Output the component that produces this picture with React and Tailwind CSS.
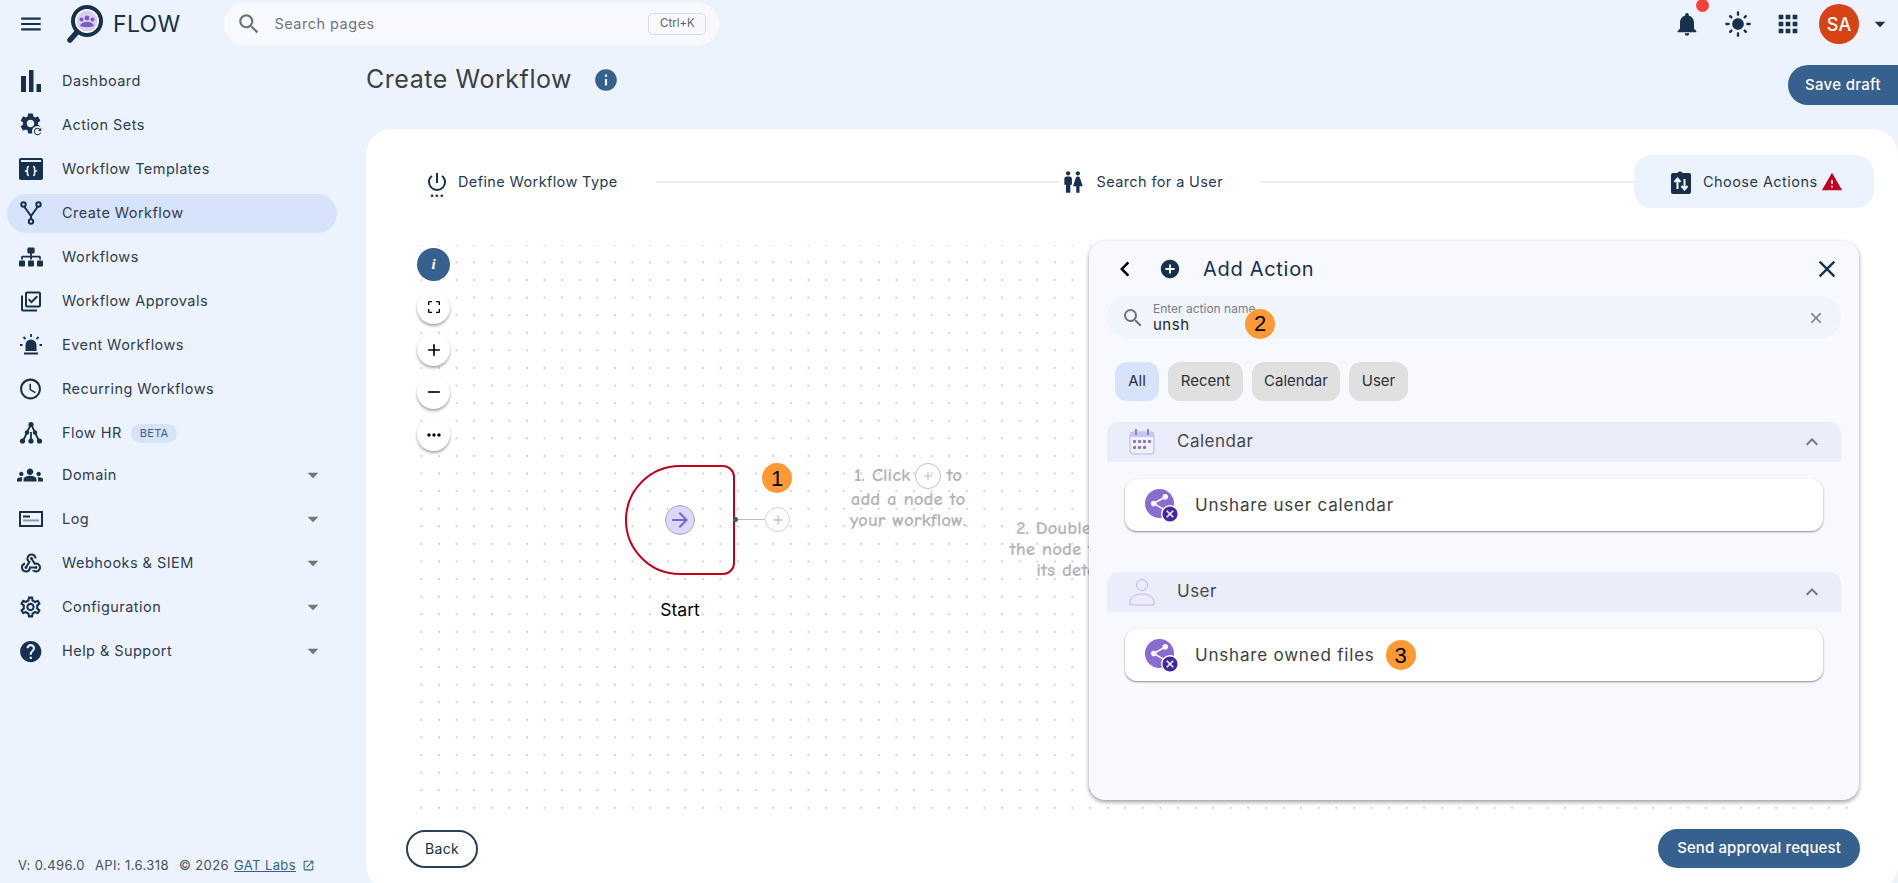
import React from 'react';
import { FaSitemap } from 'react-icons/fa';
import {
    MdAdd,
    MdAddCircle,
    MdApps,
    MdArrowDropDown,
    MdArrowForward,
    MdCancel,
    MdChevronLeft,
    MdClose,
    MdExpandLess,
    MdGroups,
    MdHelp,
    MdInfo,
    MdLightMode,
    MdMenu,
    MdMoreHoriz,
    MdNotifications,
    MdOpenInNew,
    MdOutlineAccessTime,
    MdOutlineCropFree,
    MdOutlineLibraryAddCheck,
    MdOutlineSettings,
    MdPowerSettingsNew,
    MdRefresh,
    MdRemove,
    MdSearch,
    MdSettings,
    MdShare,
    MdWarning,
    MdWc,
    MdWebhook,
} from 'react-icons/md';

const Logo = () => (
    <svg width="38" height="40" viewBox="0 0 38 40">
        <line x1="12" y1="27" x2="4" y2="36" stroke="#16304d" strokeWidth="5.5" strokeLinecap="round" />
        <circle cx="21" cy="17" r="14" fill="#fff" stroke="#16304d" strokeWidth="4" />
        <circle cx="21" cy="17" r="10.5" fill="#d9cff2" />
        <circle cx="21" cy="14" r="2.4" fill="#7a5cc8" />
        <circle cx="15.5" cy="15.5" r="2" fill="#7a5cc8" />
        <circle cx="26.5" cy="15.5" r="2" fill="#7a5cc8" />
        <path d="M14 22c1-3 3-4 7-4s6 1 7 4c-3 1.500-11 1.500-14 0z" fill="#7a5cc8" />
    </svg>
);

const BarsIcon = () => (
    <svg width="24" height="24" viewBox="0 0 24 24" fill="currentColor">
        <rect x="2" y="7" width="5" height="16" />
        <rect x="10" y="1" width="4.500" height="22" />
        <rect x="17.500" y="15" width="4.500" height="8" />
    </svg>
);

const ActionSetsIcon = () => (
    <span className="relative block w-6 h-6">
        <MdSettings size={25} className="absolute -left-[1px] -top-[2px]" />
        <span className="absolute right-0 bottom-0 w-[11px] h-[11px] rounded-full bg-[#ecf3ff] flex items-center justify-center">
            <MdRefresh size={11} />
        </span>
    </span>
);

const TemplatesIcon = () => (
    <svg width="24" height="24" viewBox="0 0 24 24">
        <rect x="0" y="1" width="24" height="22" rx="2" fill="currentColor" />
        <rect x="2" y="3" width="20" height="2" fill="#ecf3ff" />
        <path d="M10 9.500c-2 0-1.500 2-1.500 3s-.5 1-1.500 1.500c1 .5 1.500.5 1.500 1.500s-.5 3 1.500 3M14 9.500c2 0 1.500 2 1.500 3s.5 1 1.500 1.500c-1 .5-1.500.5-1.500 1.500s.5 3-1.500 3" fill="none" stroke="#ecf3ff" strokeWidth="1.600" />
    </svg>
);

const ForkIcon = () => (
    <svg width="24" height="24" viewBox="0 0 24 24" fill="none" stroke="currentColor" strokeWidth="2">
        <circle cx="4.500" cy="3.500" r="2.200" />
        <circle cx="19.500" cy="3.500" r="2.200" />
        <circle cx="12" cy="20.500" r="2.200" />
        <path d="M5.500 6L12 15l6.500-9M12 15v3" />
    </svg>
);

const SirenIcon = () => (
    <svg width="24" height="24" viewBox="0 0 24 24" fill="currentColor">
        <path d="M6.500 18v-6a5.500 5.500 0 0 1 11 0v6z" />
        <rect x="5" y="19.500" width="14" height="2" />
        <path d="M12 1v3M4.500 4l2 2M19.500 4l-2 2M1 12h2.500M20.500 12H23" fill="none" stroke="currentColor" strokeWidth="1.800" />
    </svg>
);

const FlowHrIcon = () => (
    <svg width="24" height="24" viewBox="0 0 24 24" fill="currentColor">
        <path d="M12 3L4 20M12 3l8 17M12 11v9" fill="none" stroke="currentColor" strokeWidth="1.800" />
        <circle cx="12" cy="3.500" r="2.600" />
        <circle cx="8" cy="11.500" r="2.200" />
        <circle cx="16" cy="11.500" r="2.200" />
        <circle cx="3.500" cy="20" r="2.600" />
        <circle cx="12" cy="20" r="2.600" />
        <circle cx="20.500" cy="20" r="2.600" />
    </svg>
);

const LogIcon = () => (
    <svg width="24" height="24" viewBox="0 0 24 24">
        <rect x="1" y="5" width="22" height="14" fill="none" stroke="currentColor" strokeWidth="2" />
        <rect x="4" y="8.500" width="7" height="2" fill="currentColor" />
        <rect x="4" y="12.500" width="16" height="2" fill="#8a99ad" />
    </svg>
);

const ChooseActionsIcon = () => (
    <svg width="22" height="24" viewBox="0 0 22 24">
        <path d="M3 3h4.500c.5-2 4.500-2 5 0H19a2 2 0 0 1 2 2v17a2 2 0 0 1-2 2H3a2 2 0 0 1-2-2V5a2 2 0 0 1 2-2z" fill="#16304d" />
        <path d="M7.500 19V9M4.500 12l3-3.500 3 3.500M14.500 9v10M11.500 16l3 3.500 3-3.500" fill="none" stroke="#fff" strokeWidth="2" />
    </svg>
);

const CalendarIcon = () => (
    <svg width="26" height="28" viewBox="0 0 26 28">
        <rect x="1" y="4" width="24" height="22" rx="3" fill="#f0effb" stroke="#b9b2ea" />
        <rect x="1" y="4" width="24" height="5" fill="#c9c3f0" />
        <path d="M7 1v6M19 1v6" stroke="#8a7fd8" strokeWidth="2" />
        <g fill="#7f6fd0">
            <rect x="4" y="12" width="3" height="3" rx="1" />
            <rect x="9" y="12" width="3" height="3" rx="1" />
            <rect x="14" y="12" width="3" height="3" rx="1" />
            <rect x="19" y="12" width="3" height="3" rx="1" />
            <rect x="4" y="18" width="3" height="3" rx="1" />
            <rect x="9" y="18" width="3" height="3" rx="1" />
            <rect x="14" y="18" width="3" height="3" rx="1" />
        </g>
    </svg>
);

const PersonIcon = () => (
    <svg width="26" height="28" viewBox="0 0 26 28" fill="#ecebfb" stroke="#bdb7ee">
        <circle cx="13" cy="7" r="5.500" />
        <path d="M1 27v-3c0-5 5-8 12-8s12 3 12 8v3z" />
    </svg>
);

const UnshareIcon = () => (
    <span className="relative block w-[32px] h-[32px] shrink-0">
        <span className="absolute left-0 top-0 w-[29px] h-[29px] rounded-full bg-[#8a6bd1] flex items-center justify-center text-white">
            <MdShare size={23} />
        </span>
        <span className="absolute right-[-2px] bottom-[-2px] w-[18px] h-[18px] rounded-full bg-white flex items-center justify-center text-[#4527a0]">
            <MdCancel size={20} />
        </span>
    </span>
);

const NumberBadge = ({ n, className }) => (
    <span className={`w-[30px] h-[30px] rounded-full bg-[#ff9933] flex items-center justify-center text-black text-[22px] font-['Liberation_Sans',sans-serif] ${className}`}>
        {n}
    </span>
);

const navItems = [
    { label: 'Dashboard', icon: <BarsIcon /> },
    { label: 'Action Sets', icon: <ActionSetsIcon /> },
    { label: 'Workflow Templates', icon: <TemplatesIcon /> },
    { label: 'Create Workflow', icon: <ForkIcon />, active: true },
    { label: 'Workflows', icon: <FaSitemap size={24} /> },
    { label: 'Workflow Approvals', icon: <MdOutlineLibraryAddCheck size={25} /> },
    { label: 'Event Workflows', icon: <SirenIcon /> },
    { label: 'Recurring Workflows', icon: <MdOutlineAccessTime size={26} className="-ml-[1px]" /> },
    { label: 'Flow HR', icon: <FlowHrIcon />, beta: true },
    { label: 'Domain', icon: <MdGroups size={28} className="-ml-[2px]" />, caret: true },
    { label: 'Log', icon: <LogIcon />, caret: true },
    { label: 'Webhooks & SIEM', icon: <MdWebhook size={25} />, caret: true },
    { label: 'Configuration', icon: <MdOutlineSettings size={26} className="-ml-[1px]" />, caret: true },
    { label: 'Help & Support', icon: <MdHelp size={27} className="-ml-[1.500px]" />, caret: true },
];

const NavItem = ({ item }) => (
    <div className={`mx-[7px] h-[39px] w-[330px] flex items-center pl-[12px] pr-[11px] rounded-full my-[2.500px] ${item.beta ? 'mb-[0.700px]' : ''} ${item.active ? 'bg-[#d7e3fa]' : ''}`}>
        <span className="w-6 flex justify-center text-[#16304d]">{item.icon}</span>
        <span className="ml-[19px] text-[14.5px] tracking-[0.45px] text-[#2e3c50]">{item.label}</span>
        {item.beta && (
            <span className="ml-[9px] px-[9px] h-[19px] flex items-center rounded-full bg-[#d7e3fa] text-[11px] tracking-[0.3px] text-[#36618e]">BETA</span>
        )}
        {item.caret && <MdArrowDropDown size={26} className="ml-auto text-[#757575]" />}
    </div>
);

const TopBar = () => (
    <header className="h-12 flex items-center shrink-0">
        <MdMenu size={26} className="ml-[18px] text-[#16304d]" />
        <span className="ml-[22px]"><Logo /></span>
        <span className="ml-[9px] text-[23px] tracking-[0.3px] text-[#16304d]">FLOW</span>
        <div className="ml-[44px] w-[495px] h-[44px] rounded-full bg-[#f7f9ff] flex items-center pl-[12px] pr-[13px]">
            <MdSearch size={26} className="text-[#6f7276]" />
            <span className="ml-[12px] text-[14.5px] tracking-[0.5px] text-[#71757a]">Search pages</span>
            <span className="ml-auto w-[58px] h-[22px] border border-[#dadce0] rounded-[5px] flex items-center justify-center text-[11.5px] text-[#5f6368]">Ctrl+K</span>
        </div>
        <div className="ml-auto flex items-center text-[#16304d]">
            <span className="relative">
                <MdNotifications size={28} />
                <span className="absolute -top-[11px] left-[23px] w-[13px] h-[13px] rounded-full bg-[#f44336]" />
            </span>
            <MdLightMode size={28} className="ml-[23px]" />
            <MdApps size={28} className="ml-[22px]" />
            <span className="ml-[17px] w-[40px] h-[40px] rounded-full bg-[#d84315] text-white text-[18px] font-medium flex items-center justify-center">SA</span>
            <MdArrowDropDown size={26} className="ml-[8px] mr-[5px]" />
        </div>
    </header>
);

const Sidebar = () => (
    <aside className="w-[366px] shrink-0 flex flex-col pt-[11px]">
        {navItems.map((item) => (
            <NavItem key={item.label} item={item} />
        ))}
        <div className="mt-auto mb-[8px] ml-[18px] flex items-center text-[13px] tracking-[0.4px] text-[#44505f]">
            <span>V: 0.496.0</span>
            <span className="ml-[10px]">API: 1.6.318</span>
            <span className="ml-[10px]">© 2026</span>
            <span className="ml-[5px] underline text-[#36618e]">GAT Labs</span>
            <MdOpenInNew size={13} className="ml-[6px] text-[#36618e]" />
        </div>
    </aside>
);

const Stepper = () => (
    <div className="h-[53px] flex items-center pl-[59px] pr-[24px] text-[14.5px] tracking-[0.38px] text-[#263a52]">
        <span className="relative w-6 flex justify-center text-[#16304d]">
            <MdPowerSettingsNew size={24} />
            <span className="absolute -bottom-[5px] text-[8px] leading-none">•••</span>
        </span>
        <span className="ml-[9px]">Define Workflow Type</span>
        <span className="ml-[38px] w-[403px] h-[2px] bg-[#eeeeee]" />
        <MdWc size={26} className="ml-[1px] text-[#16304d]" />
        <span className="ml-[11px]">Search for a User</span>
        <span className="ml-[37px] flex-1 h-[2px] bg-[#eeeeee]" />
        <div className="w-[240px] h-[53px] rounded-[18px] bg-[#ecf3ff] flex items-center pl-[36px]">
            <ChooseActionsIcon />
            <span className="ml-[11px] tracking-[0.45px]">Choose Actions</span>
            <MdWarning size={22} className="ml-[3px] text-[#bf0020]" />
        </div>
    </div>
);

const CanvasButton = ({ children, dark }) => (
    <button className={`w-[33px] h-[33px] rounded-full flex items-center justify-center ${dark ? 'bg-[#36618e] text-white' : 'bg-white text-black shadow-[0_2px_3px_rgba(0,0,0,0.35)]'}`}>
        {children}
    </button>
);

const CanvasControls = () => (
    <div className="absolute left-[12px] top-[3px] flex flex-col gap-[9.500px]">
        <CanvasButton dark>
            <span className="italic font-bold text-[15px] font-['Liberation_Serif',serif]">i</span>
        </CanvasButton>
        <CanvasButton><MdOutlineCropFree size={16} /></CanvasButton>
        <CanvasButton><MdAdd size={20} /></CanvasButton>
        <CanvasButton><MdRemove size={20} /></CanvasButton>
        <CanvasButton><MdMoreHoriz size={20} /></CanvasButton>
    </div>
);

const StartNode = () => (
    <>
        <div className="absolute left-[220px] top-[220px] w-[110px] h-[110px] border-[2.500px] border-[#c4001d] rounded-l-[55px] rounded-r-[12px] flex items-center justify-center">
            <span className="w-[30px] h-[30px] rounded-full bg-[#dcd9f7] border border-[#a89ee6] flex items-center justify-center text-[#7e63cf]">
                <MdArrowForward size={24} />
            </span>
        </div>
        <span className="absolute left-[328px] top-[272px] w-[5px] h-[5px] rounded-full bg-[#555555]" />
        <span className="absolute left-[333px] top-[274px] w-[27px] h-[1px] bg-[#bdbdbd]" />
        <span className="absolute left-[360px] top-[262px] w-[25px] h-[25px] rounded-full border border-[#d5d5d5] bg-white/70 flex items-center justify-center text-[#c4c4c4]">
            <MdAdd size={16} />
        </span>
        <span className="absolute left-[220px] top-[352px] w-[110px] text-center text-[17.5px] text-black">Start</span>
        <NumberBadge n="1" className="absolute left-[357px] top-[218px]" />
    </>
);

const Hints = () => (
    <div className="font-['Comic_Neue','Comic_Sans_MS',cursive] font-semibold text-[#b4b4bc] text-[19px] leading-[21px] text-center">
        <div className="absolute left-[423px] top-[217px] w-[160px]">
            <div className="flex items-center justify-center h-[27px]">
                1. Click
                <span className="mx-[5px] w-[26px] h-[26px] rounded-full border border-[#c0c0c0] flex items-center justify-center text-[#c0c0c0]">
                    <MdAdd size={14} />
                </span>
                to
            </div>
            <div>add a node to</div>
            <div>your workflow.</div>
        </div>
        <div className="absolute left-[590px] top-[273px] w-[160px]">
            <div>2. Double click</div>
            <div>the node to edit</div>
            <div>its details</div>
        </div>
    </div>
);

const ActionCard = ({ label, badge }) => (
    <div className="mx-[18px] h-[52px] rounded-[12px] bg-white shadow-[0_1px_2px_rgba(0,0,0,0.45)] flex items-center pl-[20px]">
        <UnshareIcon />
        <span className="ml-[18px] mt-[2px] text-[17px] tracking-[0.8px] text-[#3c4043]">{label}</span>
        {badge && <NumberBadge n={badge} className="ml-[11px]" />}
    </div>
);

const ActionGroup = ({ icon, label, children }) => (
    <div>
        <div className="h-[40px] rounded-t-[12px] bg-[#ecedfa] flex items-center pl-[22px] pr-[17px]">
            <span className="w-[26px] flex justify-center">{icon}</span>
            <span className="ml-[22px] text-[17px] tracking-[0.5px] text-[#44474e]">{label}</span>
            <MdExpandLess size={24} className="ml-auto text-[#70757a]" />
        </div>
        <div className="mt-[17px]">{children}</div>
    </div>
);

const AddActionPanel = () => (
    <div className="absolute left-[684px] top-[-4px] w-[770px] h-[559px] rounded-[16px] bg-[#f7f9ff] shadow-[0_2px_4px_rgba(0,0,0,0.4)] px-[18px]">
        <div className="h-[55px] flex items-center text-[#16304d]">
            <MdChevronLeft size={30} className="ml-[3px] text-black" />
            <MdAddCircle size={22} className="ml-[19px]" />
            <span className="ml-[22px] text-[20px] tracking-[0.7px]">Add Action</span>
            <MdClose size={28} className="ml-auto" />
        </div>
        <div className="h-[43px] rounded-full bg-[#f0f4fd] flex items-center pl-[14px] pr-[16px]">
            <MdSearch size={24} className="text-[#6f7276]" />
            <div className="relative ml-[8px] -mt-[2px] flex flex-col">
                <span className="text-[12px] leading-[15px] text-[#7b7e83]">Enter action name</span>
                <span className="text-[15px] leading-[17px] tracking-[0.5px] text-[#23272e]">unsh</span>
                <NumberBadge n="2" className="absolute left-[92px] top-[8px]" />
            </div>
            <MdClose size={18} className="ml-auto text-[#75787c]" />
        </div>
        <div className="mt-[23px] ml-[8px] flex gap-[9px] text-[15px] text-[#2d3136]">
            <span className="h-[39px] w-[44px] rounded-[12px] bg-[#d7e3fa] flex items-center justify-center">All</span>
            <span className="h-[39px] w-[75px] rounded-[12px] bg-[#e0e0e0] flex items-center justify-center">Recent</span>
            <span className="h-[39px] w-[88px] rounded-[12px] bg-[#e0e0e0] flex items-center justify-center">Calendar</span>
            <span className="h-[39px] w-[59px] rounded-[12px] bg-[#e0e0e0] flex items-center justify-center">User</span>
        </div>
        <div className="mt-[21px] flex flex-col gap-[41px]">
            <ActionGroup icon={<CalendarIcon />} label="Calendar">
                <ActionCard label="Unshare user calendar" />
            </ActionGroup>
            <ActionGroup icon={<PersonIcon />} label="User">
                <ActionCard label="Unshare owned files" badge="3" />
            </ActionGroup>
        </div>
    </div>
);

const App = () => (
    <div className="h-screen overflow-hidden bg-[#ecf3ff] flex flex-col font-['Inter',sans-serif]">
        <TopBar />
        <div className="flex flex-1 min-h-0">
            <Sidebar />
            <main className="flex-1 min-w-0 flex flex-col">
                <div className="h-[81px] shrink-0 flex items-start">
                    <div className="h-[63px] flex items-center pt-[1px]">
                        <h1 className="text-[25px] tracking-[0.55px] text-[#3b4045]">Create Workflow</h1>
                        <MdInfo size={26} className="ml-[21px] text-[#36618e]" />
                    </div>
                    <button className="ml-auto mt-[17px] w-[110px] h-[40px] rounded-l-full rounded-r-[20px] bg-[#36618e] text-white text-[15px] font-medium tracking-[0.3px]">
                        Save draft
                    </button>
                </div>
                <div className="w-full h-[762px] shrink-0 rounded-[26px] bg-white pt-[26px]">
                    <Stepper />
                    <div className="relative mt-[37px] ml-[39px] w-[1446px] h-[564px] bg-[radial-gradient(circle,#d2d2d2_0.7px,transparent_0.9px)] bg-[size:17.6px_17.6px] bg-[position:7.6px_8.6px]">
                        <CanvasControls />
                        <StartNode />
                        <Hints />
                        <AddActionPanel />
                    </div>
                    <div className="mt-[20px] pl-[40px] pr-[38px] flex items-center justify-between">
                        <button className="w-[72px] h-[38px] rounded-full border-[2px] border-[#2b4058] bg-white text-[14px] tracking-[0.3px] text-[#16304d]">Back</button>
                        <button className="w-[202px] h-[39px] rounded-full bg-[#36618e] text-white text-[15px] font-medium tracking-[0.1px]">Send approval request</button>
                    </div>
                </div>
            </main>
        </div>
    </div>
);

export default App;
